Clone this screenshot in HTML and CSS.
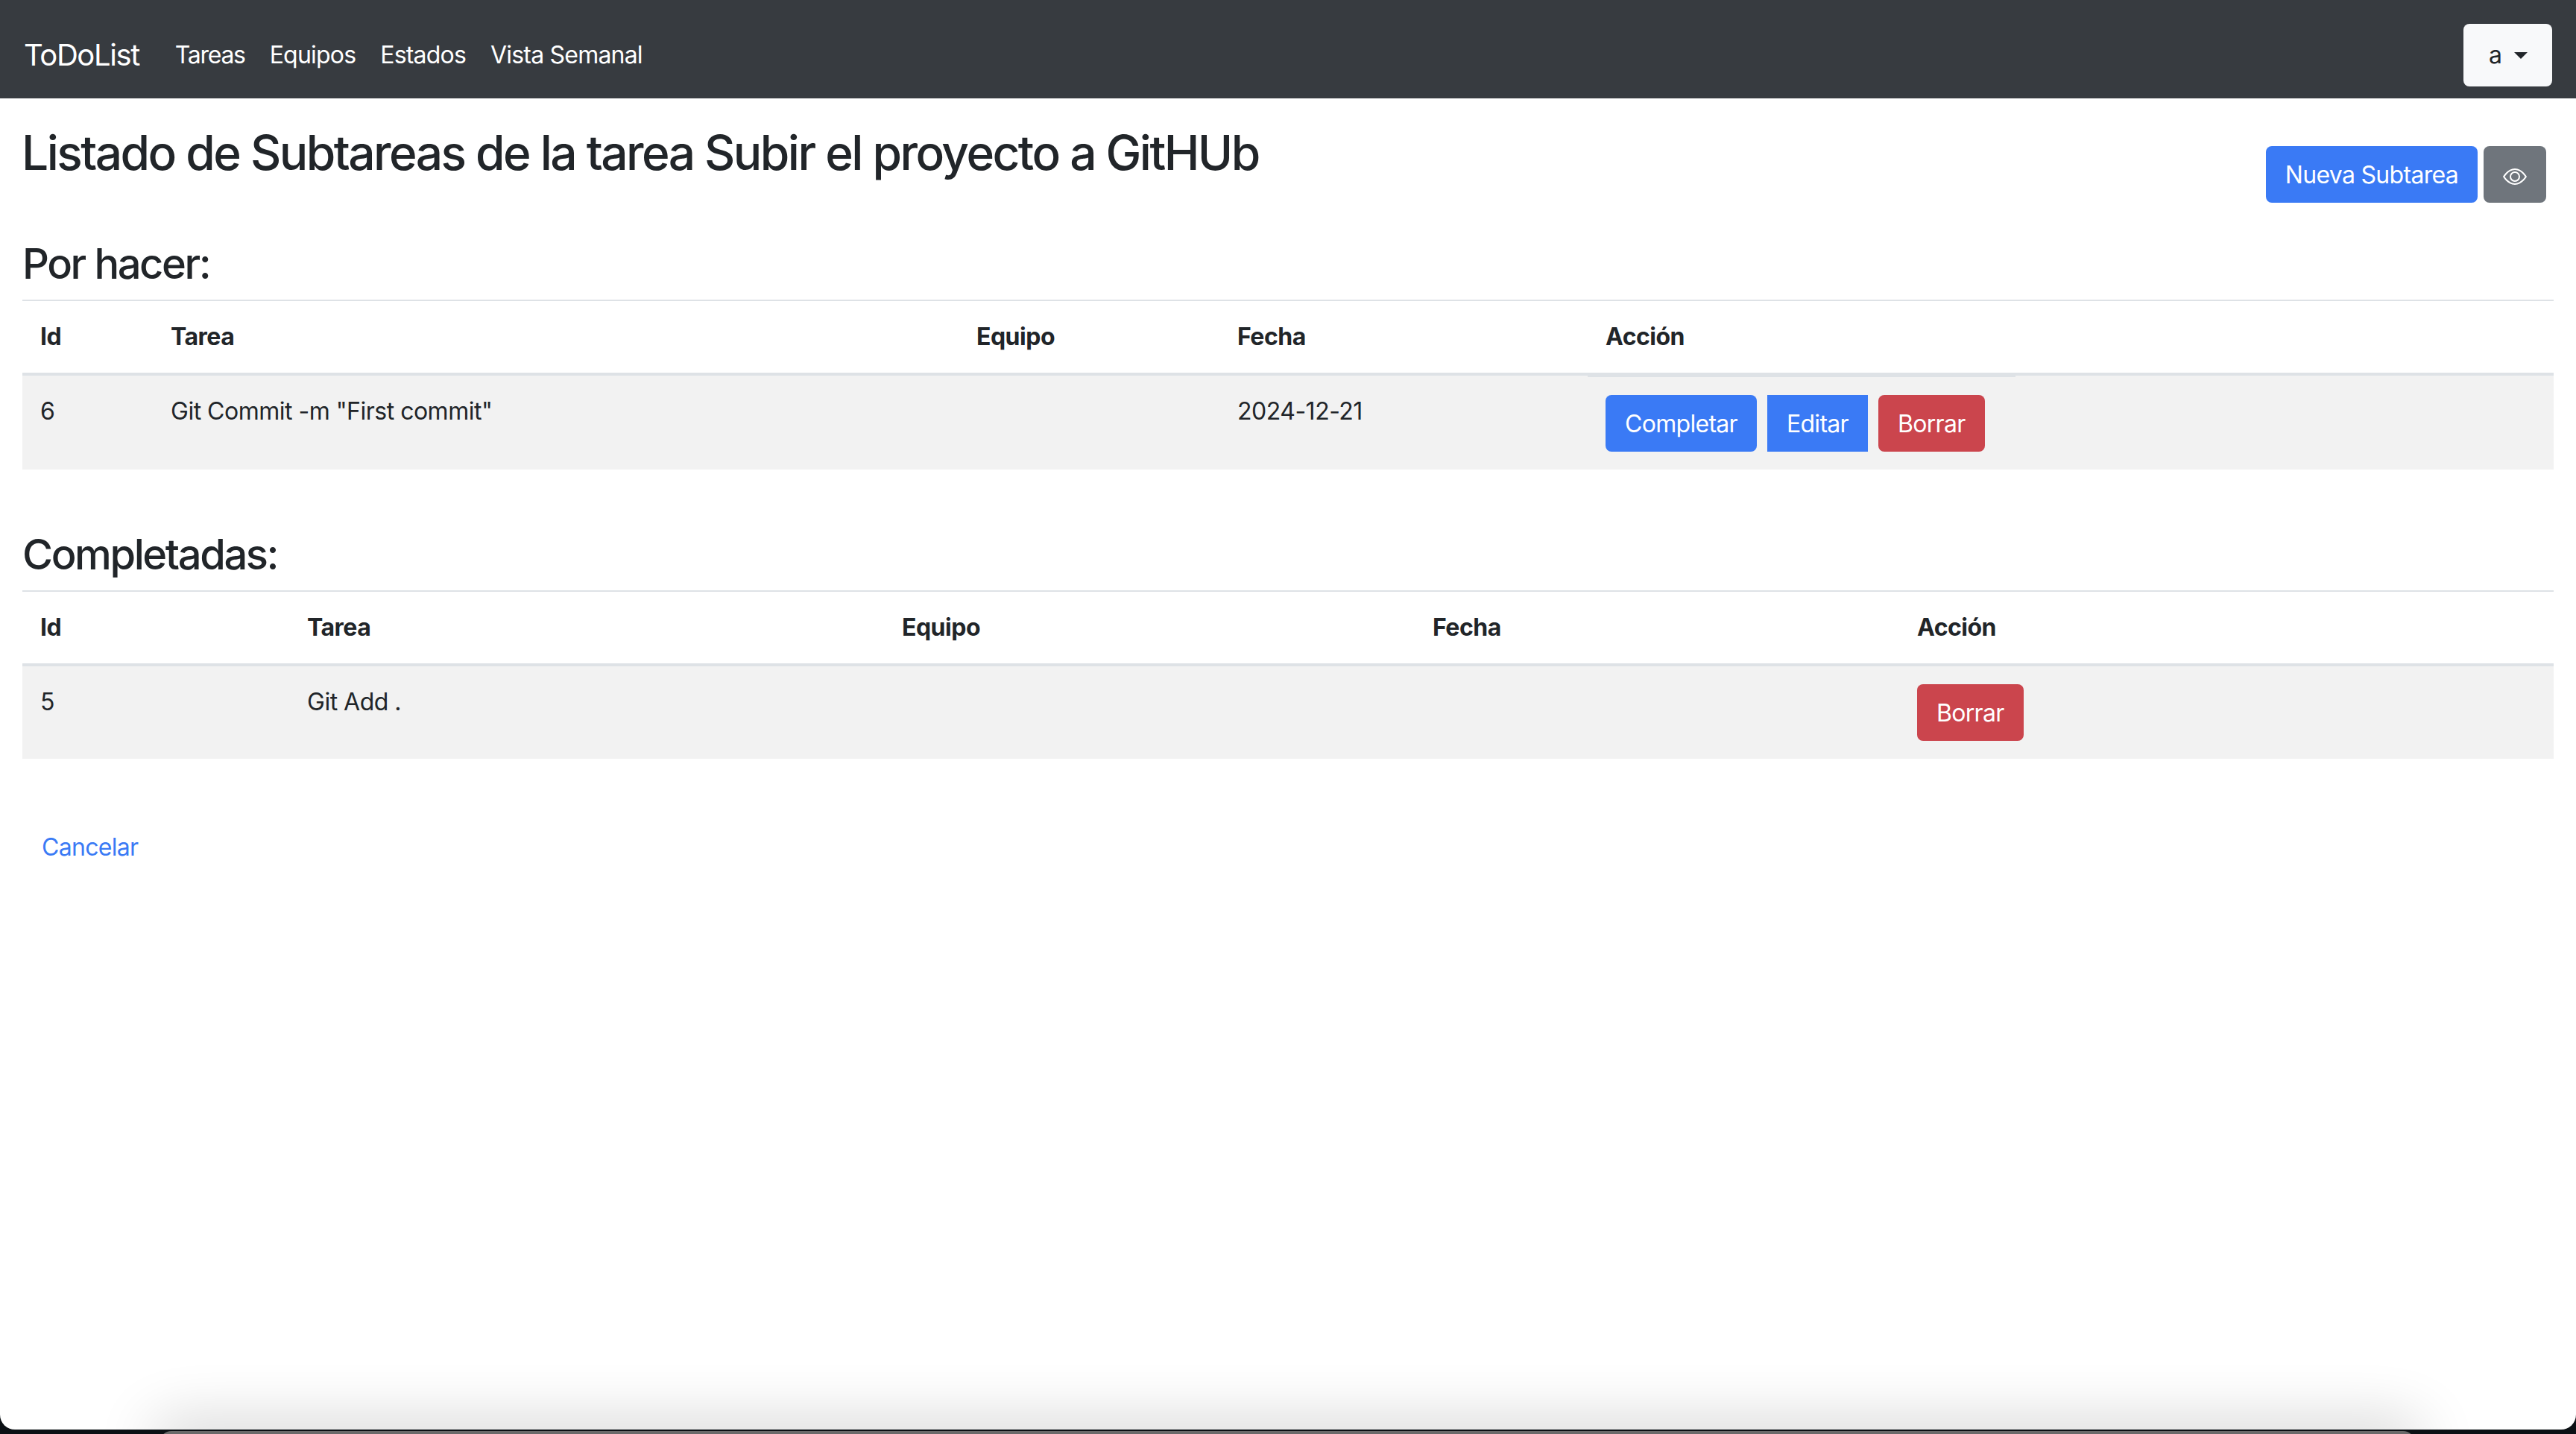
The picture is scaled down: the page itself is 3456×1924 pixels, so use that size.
FILE: index.html
```html
<!DOCTYPE html>
<html lang="es">
    <head>
        <meta charset="UTF-8" />
        <title>ToDoList</title>
        <link rel="stylesheet" href="styles.css">
    </head>

    <body>
        <div class="window">
            <nav class="navbar">
                <a class="brand" href="#">ToDoList</a>
                <ul class="nav-links">
                    <li><a href="#">Tareas</a></li>
                    <li><a href="#">Equipos</a></li>
                    <li><a href="#">Estados</a></li>
                    <li><a href="#">Vista Semanal</a></li>
                </ul>
                <button class="user-btn">a<span class="caret"></span></button>
            </nav>

            <main class="container">
                <div class="title-row">
                    <h1>Listado de Subtareas de la tarea Subir el proyecto a GitHUb</h1>
                    <div class="title-actions">
                        <a class="btn btn-blue" href="#">Nueva Subtarea</a>
                        <a class="btn btn-gray btn-eye" href="#">
                            <svg class="eye" viewBox="0 0 16 16" fill="currentColor">
                                <path d="M16 8s-3-5.5-8-5.5S0 8 0 8s3 5.5 8 5.5S16 8 16 8zM1.173 8a13.133 13.133 0 0 1 1.66-2.043C4.12 4.668 5.88 3.5 8 3.5c2.12 0 3.879 1.168 5.168 2.457A13.133 13.133 0 0 1 14.828 8c-.058.087-.122.183-.195.288-.335.48-.83 1.12-1.465 1.755C11.879 11.332 10.119 12.5 8 12.5c-2.12 0-3.879-1.168-5.168-2.457A13.134 13.134 0 0 1 1.172 8z"/>
                                <path d="M8 5.5a2.5 2.5 0 1 0 0 5 2.5 2.5 0 0 0 0-5zM4.5 8a3.5 3.5 0 1 1 7 0 3.5 3.5 0 0 1-7 0z"/>
                            </svg>
                        </a>
                    </div>
                </div>

                <h3>Por hacer:</h3>
                <table class="table todo">
                    <colgroup>
                        <col class="c1"><col class="c2"><col class="c3"><col class="c4"><col class="c5"><col class="c6">
                    </colgroup>
                    <thead>
                        <tr>
                            <th>Id</th>
                            <th>Tarea</th>
                            <th>Equipo</th>
                            <th>Fecha</th>
                            <th>Acción</th>
                            <th></th>
                        </tr>
                    </thead>
                    <tbody>
                        <tr>
                            <td>6</td>
                            <td>Git Commit -m "First commit"</td>
                            <td></td>
                            <td>2024-12-21</td>
                            <td class="actions">
                                <div class="btn-row">
                                    <a class="btn btn-blue" href="#">Completar</a>
                                    <a class="btn btn-blue square" href="#">Editar</a>
                                    <a class="btn btn-red" href="#">Borrar</a>
                                </div>
                            </td>
                            <td></td>
                        </tr>
                    </tbody>
                </table>

                <h3 class="second">Completadas:</h3>
                <table class="table done">
                    <colgroup>
                        <col class="c1"><col class="c2"><col class="c3"><col class="c4"><col class="c5">
                    </colgroup>
                    <thead>
                        <tr>
                            <th>Id</th>
                            <th>Tarea</th>
                            <th>Equipo</th>
                            <th>Fecha</th>
                            <th>Acción</th>
                        </tr>
                    </thead>
                    <tbody>
                        <tr>
                            <td>5</td>
                            <td>Git Add .</td>
                            <td></td>
                            <td></td>
                            <td>
                                <div class="btn-row">
                                    <a class="btn btn-red" href="#">Borrar</a>
                                </div>
                            </td>
                        </tr>
                    </tbody>
                </table>

                <a class="btn btn-link" href="#">Cancelar</a>
            </main>

            <div class="dock-shadow"></div>
        </div>
        <div class="dock"></div>
    </body>
</html>
```

FILE: styles.css
```css
html,
body {
    height: 100%;
    overflow: hidden;
}

body {
    margin: 0;
    background: #0b1014;
    color: #212529;
    font: 32px/48px Inter, "Liberation Sans", sans-serif;
    letter-spacing: -0.5px;
}

a {
    text-decoration: none;
}

/* the browser window, the desktop shows below its rounded corners */
.window {
    position: relative;
    height: 1918px;
    overflow: hidden;
    background: #fff;
    border-radius: 0 0 20px 20px;
}

.dock-shadow {
    position: absolute;
    left: 214px;
    right: 216px;
    bottom: -30px;
    height: 30px;
    border-radius: 20px 20px 0 0;
    box-shadow: 0 0 80px 10px rgba(0, 0, 0, 0.2);
}

.dock {
    height: 30px;
    margin: 2px 216px 0 214px;
    background: #6a6a6a;
    border-radius: 16px 16px 0 0;
}

/* navbar */
.navbar {
    display: flex;
    align-items: center;
    height: 132px;
    box-sizing: border-box;
    padding: 32px 32px 16px;
    background: #373b40;
}

.brand {
    margin-right: 48px;
    color: #fff;
    font-size: 40px;
    line-height: 60px;
    letter-spacing: -1.4px;
}

.nav-links {
    display: flex;
    gap: 33px;
    margin: 0;
    padding: 0;
    list-style: none;
    letter-spacing: -0.8px;
}

.nav-links a {
    color: #fff;
}

.nav-links li:first-child {
    letter-spacing: -1.3px;
}

.user-btn {
    display: flex;
    align-items: center;
    height: 84px;
    margin-left: auto;
    padding: 0 33px 0 34px;
    border: 0;
    border-radius: 8px;
    background: #f8f9fa;
    color: #212529;
    font: inherit;
}

.caret {
    margin-left: 16px;
    border-top: 9.6px solid #212529;
    border-left: 9.6px solid transparent;
    border-right: 9.6px solid transparent;
}

/* content */
.container {
    padding: 0 30px;
}

.title-row {
    display: flex;
    justify-content: space-between;
    align-items: flex-start;
    padding-top: 34px;
    margin-bottom: 48px;
}

h1 {
    margin: 0 0 0 -1px;
    font-size: 64px;
    line-height: 77px;
    font-weight: 500;
    letter-spacing: -2.53px;
}

.title-actions {
    display: flex;
    gap: 8px;
    margin: 30px 10px 0 0;
}

h3 {
    margin: 0 0 14px;
    font-size: 56px;
    line-height: 68px;
    font-weight: 500;
    letter-spacing: -2.4px;
}

h3.second {
    margin-top: 80px;
}

/* buttons */
.btn {
    display: inline-block;
    box-sizing: border-box;
    height: 76px;
    padding: 15px 26px 13px;
    border-radius: 8px;
    color: #fff;
    letter-spacing: -0.7px;
}

.btn-blue {
    background: #3a7af5;
}

.btn-red {
    background: #cb454d;
}

.btn-gray {
    background: #6f757c;
}

.btn-link {
    margin-top: 80px;
    color: #3a7af5;
}

.square {
    border-radius: 0;
}

.btn-row {
    display: flex;
    gap: 14px;
}

.eye {
    display: block;
    width: 32px;
    height: 32px;
    margin-top: 10px;
}

/* tables */
.table {
    width: 100%;
    table-layout: fixed;
    border-collapse: separate;
    border-spacing: 0;
    border-top: 2px solid #dee2e6;
}

.table th,
.table td {
    padding: 24px;
    text-align: left;
    vertical-align: top;
}

.table th {
    font-weight: 700;
    border-bottom: 4px solid #dee2e6;
}

.table td {
    background: #f2f2f2;
}

.table td.actions {
    border-top: 2px solid #dee2e6;
}

.todo .c1 { width: 175px; }
.todo .c2 { width: 1081px; }
.todo .c3 { width: 350px; }
.todo .c4 { width: 494px; }
.todo .c5 { width: 574px; }

.done .c1 { width: 358px; }
.done .c2 { width: 798px; }
.done .c3 { width: 712px; }
.done .c4 { width: 650px; }
```
